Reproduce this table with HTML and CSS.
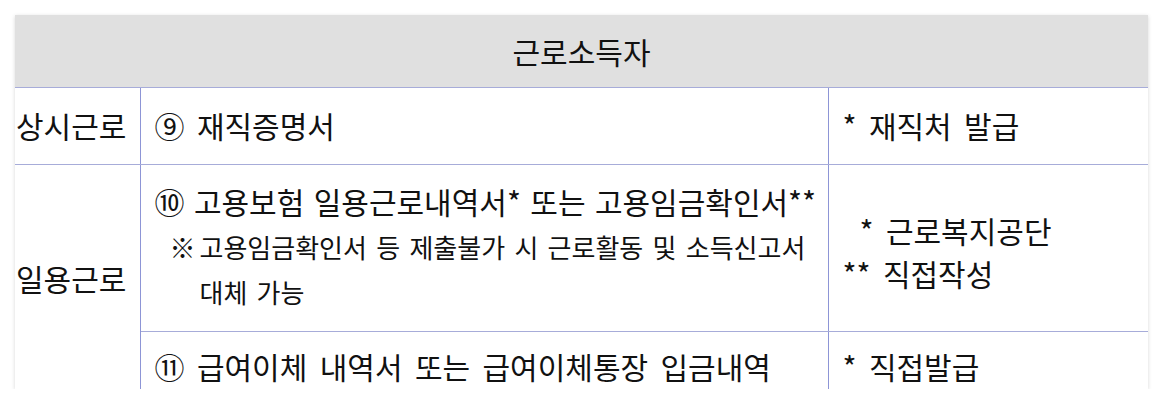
FILE: index.html
```html
<!DOCTYPE html>
<html lang="ko">
<head>
<meta charset="utf-8">
<link rel="stylesheet" href="styles.css">
</head>
<body>
<div class="card">
  <table class="doc-table">
    <colgroup>
      <col class="c-type">
      <col class="c-doc">
      <col class="c-note">
    </colgroup>
    <thead>
      <tr class="r-head">
        <th colspan="3">근로소득자</th>
      </tr>
    </thead>
    <tbody>
      <tr class="r-1">
        <td class="type">상시근로</td>
        <td class="doc">⑨ 재직증명서</td>
        <td class="note">* 재직처 발급</td>
      </tr>
      <tr class="r-2">
        <td class="type" rowspan="2">일용근로</td>
        <td class="doc">
          <div class="line tight">⑩ 고용보험 일용근로내역서* 또는 고용임금확인서**</div>
          <div class="sub"><span class="mark">※</span><span class="sub-text">고용임금확인서 등 제출불가 시 근로활동 및 소득신고서 대체 가능</span></div>
        </td>
        <td class="note note-2">
          <div class="line ind">* 근로복지공단</div>
          <div class="line">** 직접작성</div>
        </td>
      </tr>
      <tr class="r-3">
        <td class="doc">⑪ 급여이체 내역서 또는 급여이체통장 입금내역</td>
        <td class="note">* 직접발급</td>
      </tr>
    </tbody>
  </table>
</div>
</body>
</html>
```
FILE: styles.css
```css
html, body {
  margin: 0;
  padding: 0;
  background: #ffffff;
}
body {
  padding: 15px 0 0 15px;
  font-family: "Noto Sans CJK KR", "Noto Sans", sans-serif;
  color: #111111;
}
.card {
  width: 1133px;
  height: 374px;
  overflow: hidden;
  background: #ffffff;
  box-shadow: 0 1px 4px rgba(0, 0, 0, 0.16);
}
.doc-table {
  width: 1133px;
  border-collapse: collapse;
  table-layout: fixed;
}
.c-type { width: 125px; }
.c-doc { width: 688px; }
.c-note { width: 320px; }
.r-head th {
  height: 72px;
  padding: 0;
  background: #e0e0e0;
  font-weight: normal;
  font-size: 30px;
  text-align: center;
  vertical-align: middle;
  border-bottom: 1px solid #a7acd9;
}
td {
  box-sizing: border-box;
  padding: 0;
  font-size: 30px;
  line-height: 1.2;
  vertical-align: middle;
  border-bottom: 1px solid #a7acd9;
  white-space: nowrap;
  word-spacing: 4px;
}
td.type {
  text-align: left;
  padding-left: 1px;
  border-right: 1px solid #8d95d6;
  word-spacing: 0;
}
td.doc {
  padding-left: 14px;
  border-right: 1px solid #8d95d6;
}
td.note {
  padding-left: 14px;
}
.r-1 td { height: 77px; padding-bottom: 3px; }
.r-2 td { height: 167px; }
.r-2 td.doc { padding-bottom: 4px; }
td.note-2 { padding-top: 8px; }
.r-3 td { height: 60px; vertical-align: top; padding-top: 16px; }
.r-3 td.type { vertical-align: middle; padding-top: 0; }
.line { line-height: 45px; }
.line.tight { word-spacing: 1px; }
.note .line { line-height: 43px; }
.line.ind { padding-left: 17px; }
.sub {
  display: flex;
  font-size: 26px;
  line-height: 45px;
  padding-left: 15px;
  white-space: normal;
  word-spacing: 2px;
}
.mark { width: 30px; flex: none; }
.sub-text { width: 640px; }
```
